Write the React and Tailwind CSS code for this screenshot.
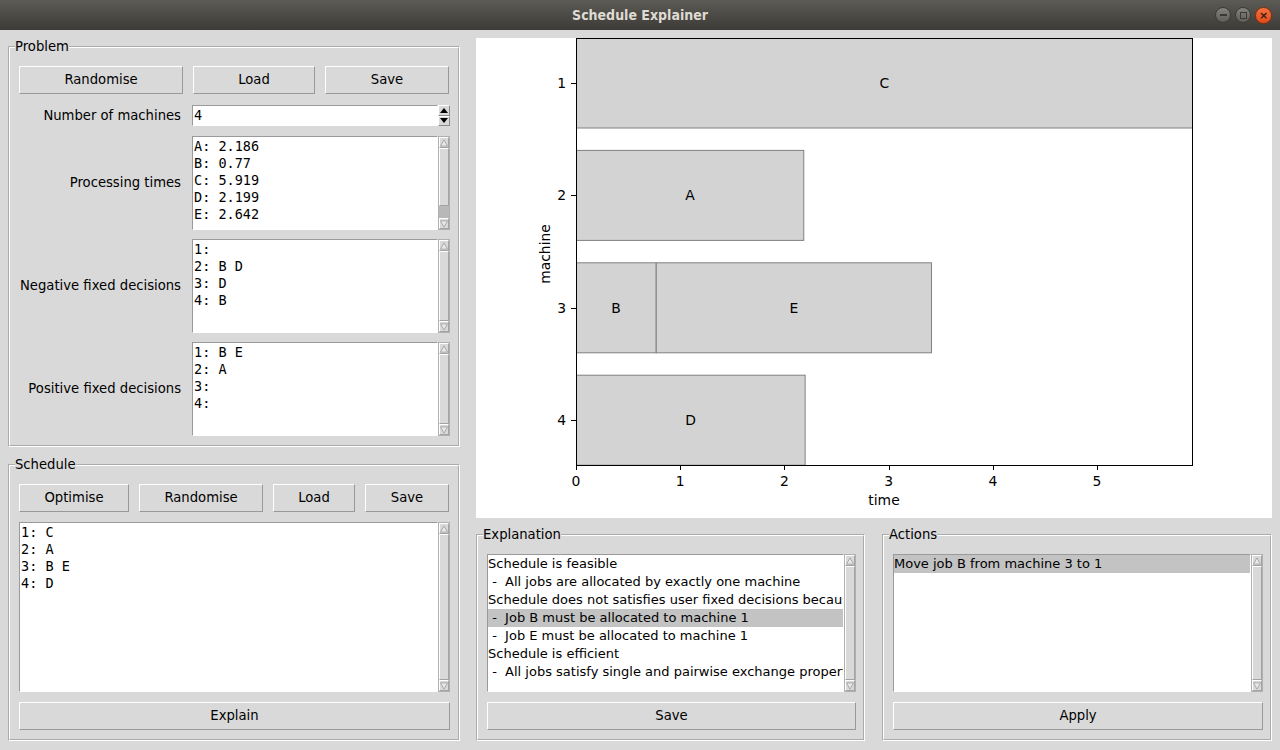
import React from 'react'

const MONO = "font-[family-name:'DejaVu_Sans_Mono',monospace] text-[13.5px] leading-[17px]"

function TitleBar() {
  return (
    <div className="h-[30px] shrink-0 grid grid-cols-[1fr_auto_1fr] items-center bg-linear-to-b from-[#5c5b56] to-[#3c3b37]">
      <div />
      <span className="font-[family-name:'DejaVu_Sans_Condensed','DejaVu_Sans',sans-serif] font-bold text-[14px] text-[#dfdbd2]">Schedule Explainer</span>
      <div className="flex justify-end gap-[4px] pr-[8px] pt-[1px]">
        <div className="w-[16px] h-[16px] rounded-full bg-linear-to-b from-[#85837e] to-[#5f5d58] border border-[#3b3a36] flex items-center justify-center">
          <div className="w-[7px] h-[2px] bg-[#3b3a36]" />
        </div>
        <div className="w-[16px] h-[16px] rounded-full bg-linear-to-b from-[#85837e] to-[#5f5d58] border border-[#3b3a36] flex items-center justify-center">
          <div className="w-[7px] h-[7px] border border-[#3b3a36]" />
        </div>
        <div className="w-[17px] h-[17px] rounded-full bg-linear-to-b from-[#f2733f] to-[#df4a16] border border-[#8c2c0c] flex items-center justify-center text-[#3b1b0e] text-[11px] leading-none font-bold">
          ×
        </div>
      </div>
    </div>
  )
}

function Group({ title, children, className = '' }) {
  return (
    <fieldset className="min-w-0 border-2 border-white [border-style:groove]">
      <legend className="ml-[5px] leading-[16px]">{title}</legend>
      <div className={className}>{children}</div>
    </fieldset>
  )
}

function TkButton({ children, className = '' }) {
  return (
    <div className={`h-[28px] flex items-center justify-center bg-[#d9d9d9] border border-t-white border-l-white border-b-[#999999] border-r-[#999999] ${className}`}>
      {children}
    </div>
  )
}

function Arrow({ down }) {
  return (
    <div className="h-[11px] shrink-0 flex items-center justify-center bg-[#d9d9d9] border border-t-white border-l-white border-b-[#a3a3a3] border-r-[#a3a3a3]">
      <svg width="9" height="8" viewBox="0 0 9 8">
        <polygon points={down ? '0.5,0.5 8.5,0.5 4.5,7.5' : '0.5,7.5 8.5,7.5 4.5,0.5'} fill="#e8e8e8" stroke="#a3a3a3" strokeWidth="1" />
      </svg>
    </div>
  )
}

function Scrollbar({ trough = false }) {
  return (
    <div className="w-[12px] shrink-0 flex flex-col bg-[#c3c3c3] border border-[#b0b0b0]">
      <Arrow />
      <div className="flex-1 bg-[#d9d9d9] border border-t-white border-l-white border-b-[#a3a3a3] border-r-[#a3a3a3]" />
      {trough && <div className="h-[12px] shrink-0 bg-[#b8b8b8]" />}
      <Arrow down />
    </div>
  )
}

function TextBox({ lines, className = '', trough = false }) {
  return (
    <div className={`flex ${className}`}>
      <div className={`flex-1 min-w-0 bg-white border border-t-[#9a9a9a] border-l-[#9a9a9a] border-b-white border-r-white pl-[1px] pt-[1px] whitespace-pre overflow-hidden ${MONO}`}>
        {lines.join('\n')}
      </div>
      <Scrollbar trough={trough} />
    </div>
  )
}

function ListBox({ rows, selected }) {
  return (
    <div className="flex h-[138px]">
      <div className="flex-1 min-w-0 bg-white border border-t-[#9a9a9a] border-l-[#9a9a9a] border-b-white border-r-white overflow-hidden text-[13px]">
        {rows.map((r, i) => (
          <div key={i} className={`h-[18px] leading-[18px] whitespace-pre overflow-hidden ${i === selected ? 'bg-[#c3c3c3]' : ''}`}>
            {r}
          </div>
        ))}
      </div>
      <Scrollbar />
    </div>
  )
}

function SpinBox() {
  return (
    <div className="flex h-[21px]">
      <div className={`flex-1 bg-white border border-t-[#9a9a9a] border-l-[#9a9a9a] border-b-white border-r-white pl-[1px] flex items-center ${MONO}`}>4</div>
      <div className="w-[12px] flex flex-col">
        {[false, true].map((down) => (
          <div key={String(down)} className="flex-1 flex items-center justify-center bg-[#d9d9d9] border border-t-white border-l-white border-b-[#8a8a8a] border-r-[#8a8a8a]">
            <svg width="8" height="5" viewBox="0 0 8 5">
              <polygon points={down ? '0,0 8,0 4,5' : '0,5 8,5 4,0'} fill="#000" />
            </svg>
          </div>
        ))}
      </div>
    </div>
  )
}

function Chart() {
  const k = 104.2
  const x = (t) => 100 + t * k
  const y = (m) => 45 + (m - 1) * 112.4
  const bars = [
    { m: 1, s: 0, d: 5.919, l: 'C' },
    { m: 2, s: 0, d: 2.186, l: 'A' },
    { m: 3, s: 0, d: 0.77, l: 'B' },
    { m: 3, s: 0.77, d: 2.642, l: 'E' },
    { m: 4, s: 0, d: 2.199, l: 'D' },
  ]
  return (
    <div className="h-[480px] bg-white">
      <svg width="796" height="480" viewBox="0 0 796 480" fontFamily="DejaVu Sans, sans-serif" fontSize="13.9">
        <defs>
          <clipPath id="ax">
            <rect x="100" y="0" width="616" height="427" />
          </clipPath>
        </defs>
        <g clipPath="url(#ax)">
          {bars.map((b) => (
            <rect key={b.l} x={x(b.s)} y={y(b.m) - 45} width={b.d * k} height="90" fill="#d3d3d3" stroke="#808080" strokeWidth="1" />
          ))}
        </g>
        {bars.map((b) => (
          <text key={b.l} x={x(b.s + b.d / 2)} y={y(b.m) + 5} textAnchor="middle" fill="#000">{b.l}</text>
        ))}
        <rect x="100.5" y="0.5" width="616" height="427" fill="none" stroke="#000" strokeWidth="1" />
        {[1, 2, 3, 4].map((m) => (
          <g key={m}>
            <line x1="95" x2="100" y1={Math.round(y(m)) + 0.5} y2={Math.round(y(m)) + 0.5} stroke="#000" />
            <text x="90" y={y(m) + 5} textAnchor="end" fill="#000">{m}</text>
          </g>
        ))}
        {[0, 1, 2, 3, 4, 5].map((t) => (
          <g key={t}>
            <line x1={Math.round(x(t)) + 0.5} x2={Math.round(x(t)) + 0.5} y1="427" y2="432" stroke="#000" />
            <text x={x(t)} y="448" textAnchor="middle" fill="#000">{t}</text>
          </g>
        ))}
        <text x="408" y="467" textAnchor="middle" fill="#000">time</text>
        <text x="0" y="0" textAnchor="middle" fill="#000" transform="translate(74 216) rotate(-90)">machine</text>
      </svg>
    </div>
  )
}

const EXPLANATION = [
  'Schedule is feasible',
  ' -  All jobs are allocated by exactly one machine',
  'Schedule does not satisfies user fixed decisions because:',
  ' -  Job B must be allocated to machine 1',
  ' -  Job E must be allocated to machine 1',
  'Schedule is efficient',
  ' -  All jobs satisfy single and pairwise exchange properties',
]

export default function App() {
  return (
    <div className="w-[1280px] h-[750px] flex flex-col bg-[#d9d9d9] overflow-hidden font-[family-name:'DejaVu_Sans',sans-serif] text-[13.2px] text-black">
      <TitleBar />
      <div className="flex-1 flex pl-[8px]">
        {/* left column */}
        <div className="w-[452px] pt-[9px] flex flex-col gap-[10px]">
          <Group title="Problem" className="pl-[9px] pr-[8px] pt-[11px] pb-[9px]">
            <div className="grid grid-cols-[164px_122px_124px] gap-[10px]">
              <TkButton>Randomise</TkButton>
              <TkButton>Load</TkButton>
              <TkButton>Save</TkButton>
            </div>
            <div className="mt-[11px] grid grid-cols-[162px_1fr] gap-x-[11px] gap-y-[9px] items-center">
              <div className="text-right">Number of machines</div>
              <SpinBox />
              <div className="text-right">Processing times</div>
              <TextBox className="h-[94px] mt-[1px]" trough lines={['A: 2.186', 'B: 0.77', 'C: 5.919', 'D: 2.199', 'E: 2.642']} />
              <div className="text-right">Negative fixed decisions</div>
              <TextBox className="h-[94px]" lines={['1:', '2: B D', '3: D', '4: B']} />
              <div className="text-right">Positive fixed decisions</div>
              <TextBox className="h-[94px]" lines={['1: B E', '2: A', '3:', '4:']} />
            </div>
          </Group>
          <Group title="Schedule" className="pl-[9px] pr-[8px] pt-[11px] pb-[9px]">
            <div className="grid grid-cols-[110px_124px_82px_84px] gap-[10px]">
              <TkButton>Optimise</TkButton>
              <TkButton>Randomise</TkButton>
              <TkButton>Load</TkButton>
              <TkButton>Save</TkButton>
            </div>
            <TextBox className="h-[170px] mt-[10px]" lines={['1: C', '2: A', '3: B E', '4: D']} />
            <TkButton className="mt-[10px]">Explain</TkButton>
          </Group>
        </div>

        {/* right column */}
        <div className="ml-[16px] w-[796px] pt-[8px] flex flex-col">
          <Chart />
          <div className="mt-[9px] grid grid-cols-[389px_390px] gap-[17px]">
            <Group title="Explanation" className="pl-[9px] pr-[7px] pt-[11px] pb-[9px]">
              <ListBox rows={EXPLANATION} selected={3} />
              <TkButton className="mt-[10px]">Save</TkButton>
            </Group>
            <Group title="Actions" className="pl-[9px] pr-[7px] pt-[11px] pb-[9px]">
              <ListBox rows={['Move job B from machine 3 to 1']} selected={0} />
              <TkButton className="mt-[10px]">Apply</TkButton>
            </Group>
          </div>
        </div>
      </div>
    </div>
  )
}
